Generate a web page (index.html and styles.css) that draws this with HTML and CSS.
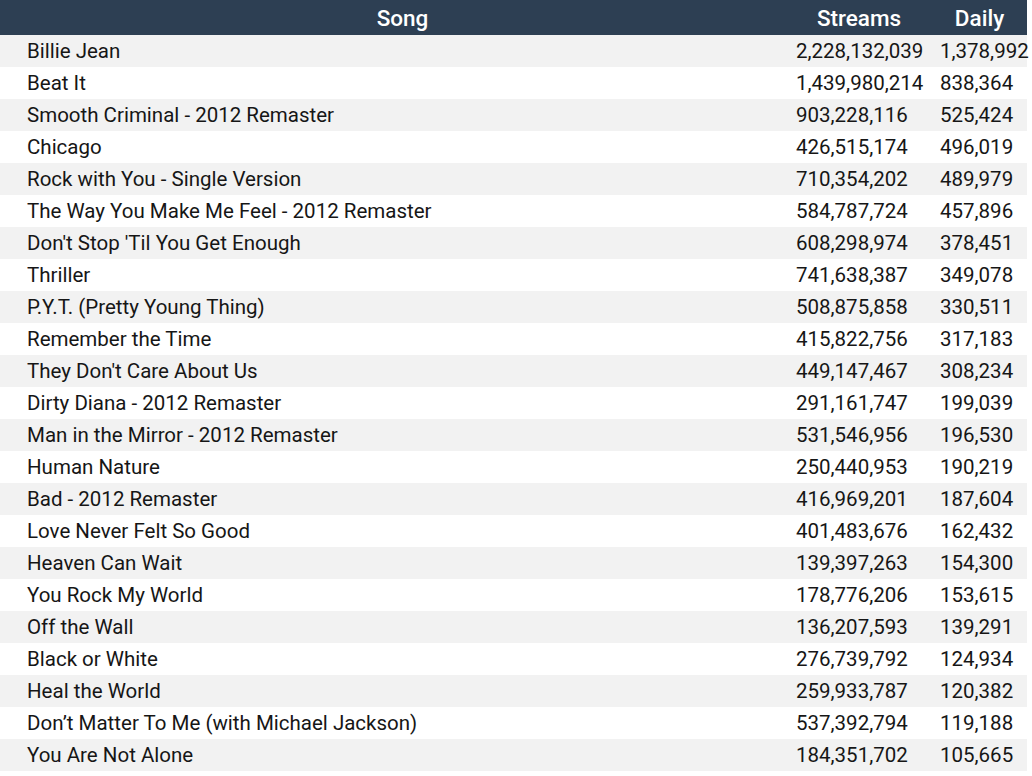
FILE: index.html
```html
<!DOCTYPE html>
<html>
<head>
<meta charset="utf-8">
<link rel="stylesheet" href="styles.css">
</head>
<body>
<div class="table">
  <div class="row head">
    <div class="c song">Song</div>
    <div class="c streams">Streams</div>
    <div class="c daily">Daily</div>
  </div>
  <div class="row"><div class="c song">Billie Jean</div><div class="c streams">2,228,132,039</div><div class="c daily">1,378,992</div></div>
  <div class="row"><div class="c song">Beat It</div><div class="c streams">1,439,980,214</div><div class="c daily">838,364</div></div>
  <div class="row"><div class="c song">Smooth Criminal - 2012 Remaster</div><div class="c streams">903,228,116</div><div class="c daily">525,424</div></div>
  <div class="row"><div class="c song">Chicago</div><div class="c streams">426,515,174</div><div class="c daily">496,019</div></div>
  <div class="row"><div class="c song">Rock with You - Single Version</div><div class="c streams">710,354,202</div><div class="c daily">489,979</div></div>
  <div class="row"><div class="c song">The Way You Make Me Feel - 2012 Remaster</div><div class="c streams">584,787,724</div><div class="c daily">457,896</div></div>
  <div class="row"><div class="c song">Don't Stop 'Til You Get Enough</div><div class="c streams">608,298,974</div><div class="c daily">378,451</div></div>
  <div class="row"><div class="c song">Thriller</div><div class="c streams">741,638,387</div><div class="c daily">349,078</div></div>
  <div class="row"><div class="c song">P.Y.T. (Pretty Young Thing)</div><div class="c streams">508,875,858</div><div class="c daily">330,511</div></div>
  <div class="row"><div class="c song">Remember the Time</div><div class="c streams">415,822,756</div><div class="c daily">317,183</div></div>
  <div class="row"><div class="c song">They Don't Care About Us</div><div class="c streams">449,147,467</div><div class="c daily">308,234</div></div>
  <div class="row"><div class="c song">Dirty Diana - 2012 Remaster</div><div class="c streams">291,161,747</div><div class="c daily">199,039</div></div>
  <div class="row"><div class="c song">Man in the Mirror - 2012 Remaster</div><div class="c streams">531,546,956</div><div class="c daily">196,530</div></div>
  <div class="row"><div class="c song">Human Nature</div><div class="c streams">250,440,953</div><div class="c daily">190,219</div></div>
  <div class="row"><div class="c song">Bad - 2012 Remaster</div><div class="c streams">416,969,201</div><div class="c daily">187,604</div></div>
  <div class="row"><div class="c song">Love Never Felt So Good</div><div class="c streams">401,483,676</div><div class="c daily">162,432</div></div>
  <div class="row"><div class="c song">Heaven Can Wait</div><div class="c streams">139,397,263</div><div class="c daily">154,300</div></div>
  <div class="row"><div class="c song">You Rock My World</div><div class="c streams">178,776,206</div><div class="c daily">153,615</div></div>
  <div class="row"><div class="c song">Off the Wall</div><div class="c streams">136,207,593</div><div class="c daily">139,291</div></div>
  <div class="row"><div class="c song">Black or White</div><div class="c streams">276,739,792</div><div class="c daily">124,934</div></div>
  <div class="row"><div class="c song">Heal the World</div><div class="c streams">259,933,787</div><div class="c daily">120,382</div></div>
  <div class="row"><div class="c song">Don’t Matter To Me (with Michael Jackson)</div><div class="c streams">537,392,794</div><div class="c daily">119,188</div></div>
  <div class="row"><div class="c song">You Are Not Alone</div><div class="c streams">184,351,702</div><div class="c daily">105,665</div></div>
</div>
</body>
</html>
```
FILE: styles.css
```css
html, body {
  margin: 0;
  padding: 0;
  background: #ffffff;
}
body {
  font-family: Roboto, "Liberation Sans", sans-serif;
  font-size: 20.5px;
  color: #161616;
  overflow: hidden;
}
.table {
  width: 1027px;
}
.row {
  display: grid;
  grid-template-columns: 786px 146px 95px;
  height: 32px;
  align-items: center;
  white-space: nowrap;
}
.row:nth-child(even) {
  background: #f2f2f2;
}
.row:nth-child(odd) {
  background: #ffffff;
}
.row.head {
  height: 35px;
  background: #2d3f53;
  color: #ffffff;
  font-weight: 500;
  font-size: 22.5px;
}
.c.song {
  padding-left: 27px;
  padding-right: 8px;
}
.c.streams {
  padding-left: 10px;
}
.c.daily {
  padding-left: 8px;
}
.head .c {
  text-align: center;
}
.head .c.streams {
  padding-left: 0;
}
.head .c.daily {
  padding-left: 0;
}
```
